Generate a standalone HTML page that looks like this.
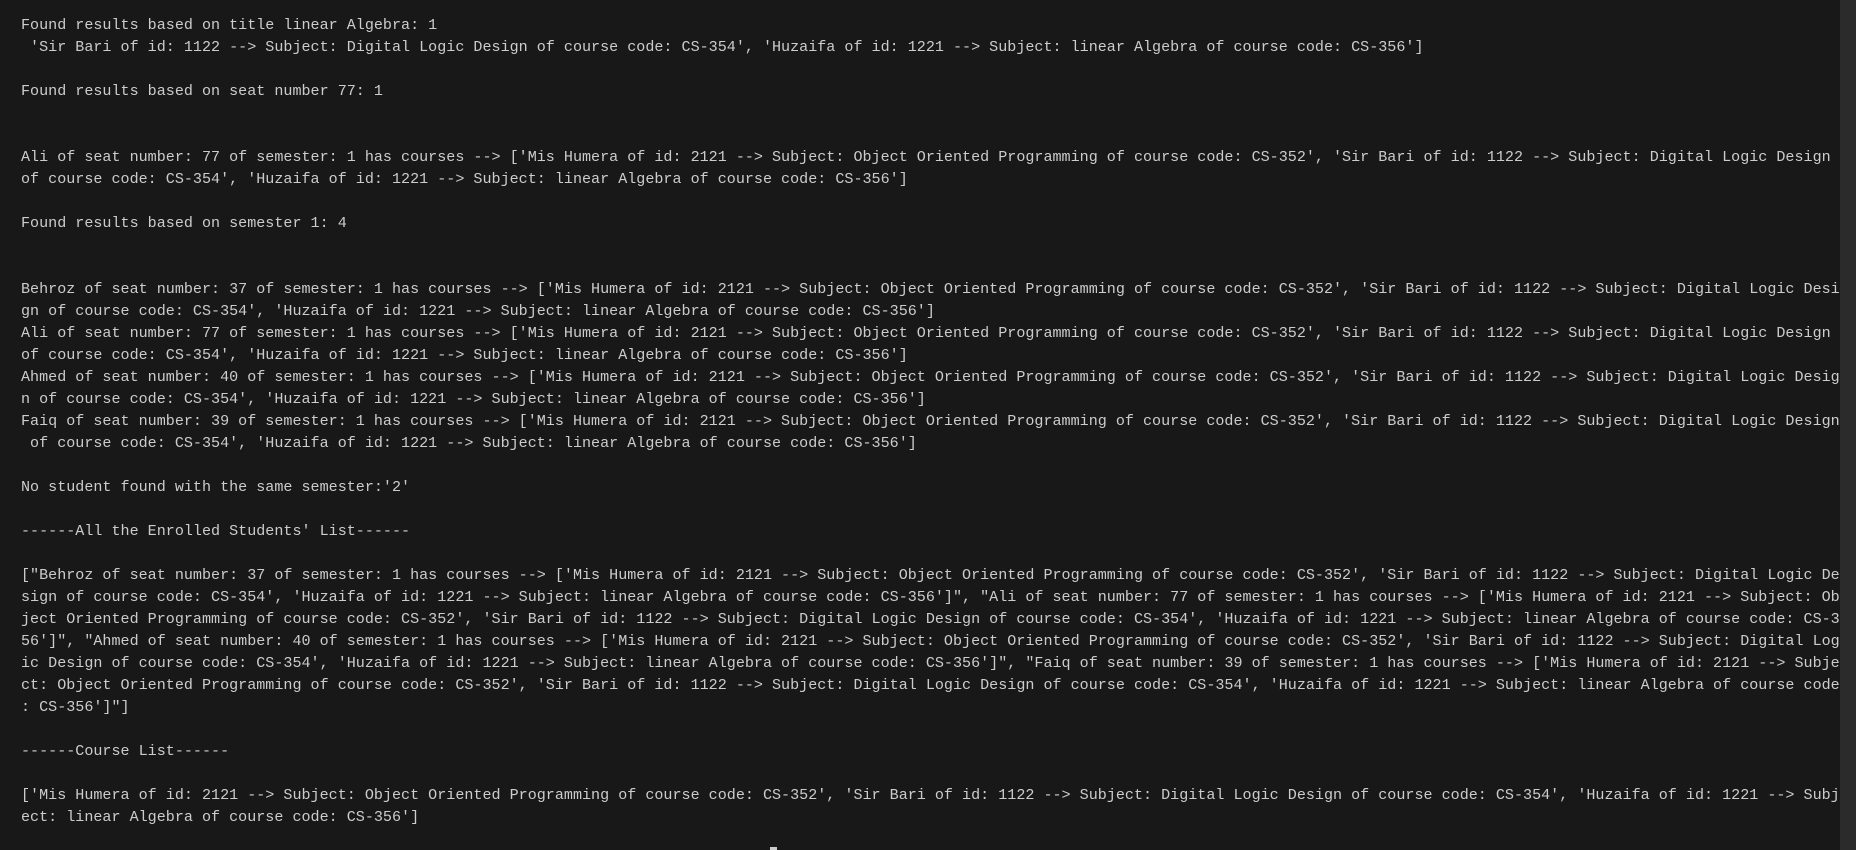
<!DOCTYPE html>
<html><head><style>
html,body{margin:0;padding:0;background:#181818;width:1856px;height:850px;overflow:hidden}
#t{position:absolute;left:21px;top:14px;font-family:"Liberation Mono",monospace;font-size:15.08px;line-height:22px;color:#cccccc;white-space:pre}
#sb{position:absolute;left:1840px;top:0;width:16px;height:850px;background:#2b2b2b}
#cur{position:absolute;left:770px;top:847px;width:7px;height:3px;background:#cccccc}
</style></head><body>
<div id="t">Found results based on title linear Algebra: 1
 'Sir Bari of id: 1122 --> Subject: Digital Logic Design of course code: CS-354', 'Huzaifa of id: 1221 --> Subject: linear Algebra of course code: CS-356']

Found results based on seat number 77: 1


Ali of seat number: 77 of semester: 1 has courses --> ['Mis Humera of id: 2121 --> Subject: Object Oriented Programming of course code: CS-352', 'Sir Bari of id: 1122 --> Subject: Digital Logic Design
of course code: CS-354', 'Huzaifa of id: 1221 --> Subject: linear Algebra of course code: CS-356']

Found results based on semester 1: 4


Behroz of seat number: 37 of semester: 1 has courses --> ['Mis Humera of id: 2121 --> Subject: Object Oriented Programming of course code: CS-352', 'Sir Bari of id: 1122 --> Subject: Digital Logic Desi
gn of course code: CS-354', 'Huzaifa of id: 1221 --> Subject: linear Algebra of course code: CS-356']
Ali of seat number: 77 of semester: 1 has courses --> ['Mis Humera of id: 2121 --> Subject: Object Oriented Programming of course code: CS-352', 'Sir Bari of id: 1122 --> Subject: Digital Logic Design
of course code: CS-354', 'Huzaifa of id: 1221 --> Subject: linear Algebra of course code: CS-356']
Ahmed of seat number: 40 of semester: 1 has courses --> ['Mis Humera of id: 2121 --> Subject: Object Oriented Programming of course code: CS-352', 'Sir Bari of id: 1122 --> Subject: Digital Logic Desig
n of course code: CS-354', 'Huzaifa of id: 1221 --> Subject: linear Algebra of course code: CS-356']
Faiq of seat number: 39 of semester: 1 has courses --> ['Mis Humera of id: 2121 --> Subject: Object Oriented Programming of course code: CS-352', 'Sir Bari of id: 1122 --> Subject: Digital Logic Design
 of course code: CS-354', 'Huzaifa of id: 1221 --> Subject: linear Algebra of course code: CS-356']

No student found with the same semester:'2'

------All the Enrolled Students' List------

["Behroz of seat number: 37 of semester: 1 has courses --> ['Mis Humera of id: 2121 --> Subject: Object Oriented Programming of course code: CS-352', 'Sir Bari of id: 1122 --> Subject: Digital Logic De
sign of course code: CS-354', 'Huzaifa of id: 1221 --> Subject: linear Algebra of course code: CS-356']", "Ali of seat number: 77 of semester: 1 has courses --> ['Mis Humera of id: 2121 --> Subject: Ob
ject Oriented Programming of course code: CS-352', 'Sir Bari of id: 1122 --> Subject: Digital Logic Design of course code: CS-354', 'Huzaifa of id: 1221 --> Subject: linear Algebra of course code: CS-3
56']", "Ahmed of seat number: 40 of semester: 1 has courses --> ['Mis Humera of id: 2121 --> Subject: Object Oriented Programming of course code: CS-352', 'Sir Bari of id: 1122 --> Subject: Digital Log
ic Design of course code: CS-354', 'Huzaifa of id: 1221 --> Subject: linear Algebra of course code: CS-356']", "Faiq of seat number: 39 of semester: 1 has courses --> ['Mis Humera of id: 2121 --> Subje
ct: Object Oriented Programming of course code: CS-352', 'Sir Bari of id: 1122 --> Subject: Digital Logic Design of course code: CS-354', 'Huzaifa of id: 1221 --> Subject: linear Algebra of course code
: CS-356']"]

------Course List------

['Mis Humera of id: 2121 --> Subject: Object Oriented Programming of course code: CS-352', 'Sir Bari of id: 1122 --> Subject: Digital Logic Design of course code: CS-354', 'Huzaifa of id: 1221 --> Subj
ect: linear Algebra of course code: CS-356']</div>
<div id="sb"></div>
<div id="cur"></div>
</body></html>
